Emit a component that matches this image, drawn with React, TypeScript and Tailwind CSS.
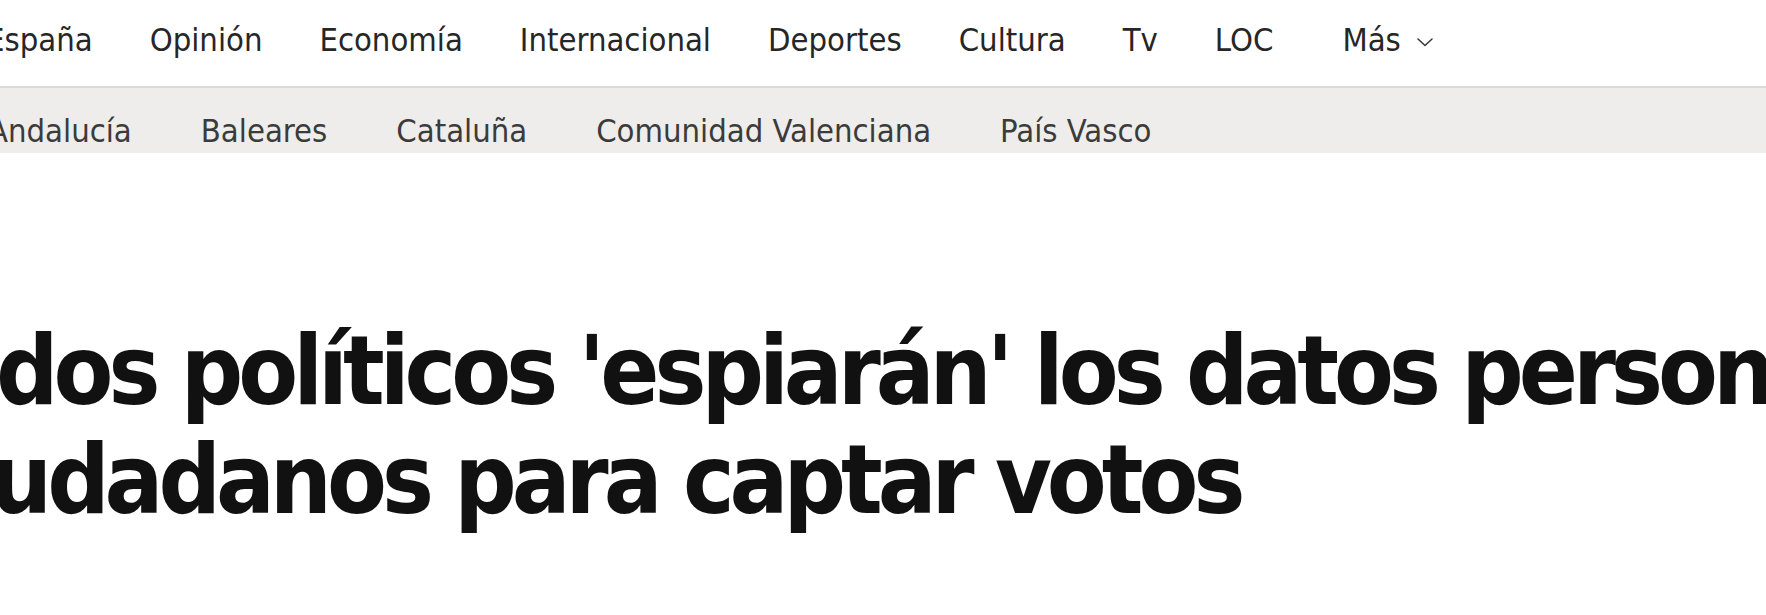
import React from 'react';

const mainItems = ['Opinión', 'Economía', 'Internacional', 'Deportes', 'Cultura', 'Tv', 'LOC'];
const regionItems = ['Baleares', 'Cataluña', 'Comunidad Valenciana', 'País Vasco'];

const font = "font-['DejaVu_Sans_Condensed','DejaVu_Sans',sans-serif] [font-stretch:condensed]";

// Text that continues beyond the left edge of the window: the prefix hangs off to the left.
const Hanging: React.FC<{ prefix: string; children: React.ReactNode; className?: string }> = ({
  prefix,
  children,
  className = '',
}) => (
  <div className={`flex whitespace-nowrap ${className}`}>
    <span className="flex w-0 min-w-0 shrink-0 justify-end">{prefix}</span>
    <span>{children}</span>
  </div>
);

const Chevron = () => (
  <svg width="20" height="12" viewBox="0 0 20 12" fill="none" className="mt-[3px]">
    <path d="M3 3 L10 9.5 L17 3" stroke="#3a3a3a" strokeWidth="1.6" strokeLinecap="round" strokeLinejoin="round" />
  </svg>
);

export default function App() {
  return (
    <div className={`h-[615px] w-full overflow-hidden bg-white ${font}`}>
      <nav className="flex h-[86px] items-center gap-[57px] whitespace-nowrap pb-[6px] text-[32.5px] text-[#262626]">
        <span className="-ml-[14px]">España</span>
        {mainItems.map((item) => (
          <span key={item}>{item}</span>
        ))}
        <span className="ml-[12px] flex items-center gap-[14px]">
          Más
          <Chevron />
        </span>
      </nav>

      <div className="flex h-[67px] items-center gap-[69px] whitespace-nowrap border-t-2 border-[#d9d9d9] bg-[#eeedeb] pt-[21px] text-[32.5px] text-[#3b3b3b]">
        <span className="-ml-[12px]">Andalucía</span>
        {regionItems.map((item) => (
          <span key={item}>{item}</span>
        ))}
      </div>

      <h1 className="mt-[163px] text-[97px] font-bold leading-[109px] tracking-[-5px] text-[#111111]">
        <Hanging prefix="Los parti" className="-ml-[4px]">
          dos políticos 'espiarán' los datos personales de los
        </Hanging>
        <Hanging prefix="ci" className="-ml-[10px]">
          udadanos para captar votos
        </Hanging>
      </h1>
    </div>
  );
}
